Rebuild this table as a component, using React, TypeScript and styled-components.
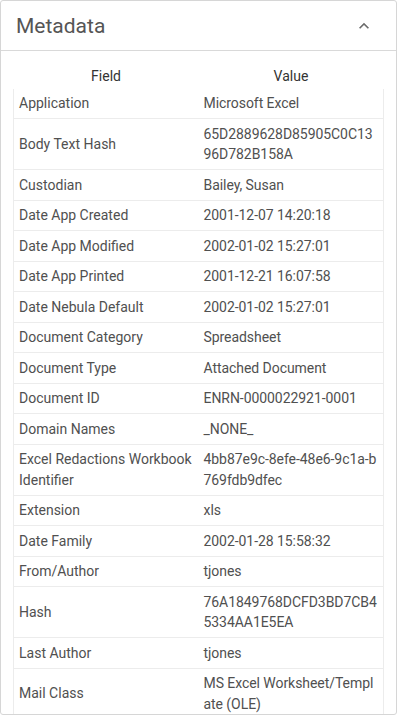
import React from 'react';
import styled, { createGlobalStyle } from 'styled-components';

interface MetaRow {
  field: string;
  value: string;
}

const rows: MetaRow[] = [
  { field: 'Application', value: 'Microsoft Excel' },
  { field: 'Body Text Hash', value: '65D2889628D85905C0C1396D782B158A' },
  { field: 'Custodian', value: 'Bailey, Susan' },
  { field: 'Date App Created', value: '2001-12-07 14:20:18' },
  { field: 'Date App Modified', value: '2002-01-02 15:27:01' },
  { field: 'Date App Printed', value: '2001-12-21 16:07:58' },
  { field: 'Date Nebula Default', value: '2002-01-02 15:27:01' },
  { field: 'Document Category', value: 'Spreadsheet' },
  { field: 'Document Type', value: 'Attached Document' },
  { field: 'Document ID', value: 'ENRN-0000022921-0001' },
  { field: 'Domain Names', value: '_NONE_' },
  { field: 'Excel Redactions Workbook Identifier', value: '4bb87e9c-8efe-48e6-9c1a-b769fdb9dfec' },
  { field: 'Extension', value: 'xls' },
  { field: 'Date Family', value: '2002-01-28 15:58:32' },
  { field: 'From/Author', value: 'tjones' },
  { field: 'Hash', value: '76A1849768DCFD3BD7CB45334AA1E5EA' },
  { field: 'Last Author', value: 'tjones' },
  { field: 'Mail Class', value: 'MS Excel Worksheet/Template (OLE)' },
];

const App: React.FC = () => {
  return (
    <>
      <GlobalStyle />
      <Card>
        <CardHeader>
          <Title>Metadata</Title>
          <Toggle aria-label="Collapse">
            <svg width="20" height="20" viewBox="0 0 24 24">
              <path d="M7.41 15.41L12 10.83l4.59 4.58L18 14l-6-6-6 6z" fill="currentColor" />
            </svg>
          </Toggle>
        </CardHeader>

        <CardBody>
          <Table>
            <thead>
              <tr>
                <HeadCell>Field</HeadCell>
                <HeadCell>Value</HeadCell>
              </tr>
            </thead>
            <tbody>
              {rows.map((row) => (
                <tr key={row.field}>
                  <FieldCell>{row.field}</FieldCell>
                  <ValueCell>{row.value}</ValueCell>
                </tr>
              ))}
            </tbody>
          </Table>
        </CardBody>
      </Card>
    </>
  );
};

export default App;

const GlobalStyle = createGlobalStyle`
  * {
    box-sizing: border-box;
  }

  body {
    margin: 0;
    background: #fff;
    font-family: Roboto, 'Liberation Sans', sans-serif;
  }
`;

const Card = styled.div`
  width: 397px;
  height: 715px;
  border: 1px solid #d6d6d6;
  border-radius: 3px;
  display: flex;
  flex-direction: column;
  overflow: hidden;
`;

const CardHeader = styled.div`
  height: 50px;
  flex-shrink: 0;
  padding: 0 22px 0 15px;
  display: flex;
  align-items: center;
  justify-content: space-between;
  border-bottom: 1px solid #d9d9d9;
`;

const Title = styled.h2`
  margin: 0;
  font-size: 21px;
  font-weight: 400;
  color: #555;
`;

const Toggle = styled.button`
  border: none;
  background: none;
  padding: 0;
  color: #6b6b6b;
  display: flex;
  cursor: pointer;
`;

const CardBody = styled.div`
  flex: 1;
  overflow: hidden;
  padding: 14px 12px 0;
`;

const Table = styled.table`
  width: 100%;
  table-layout: fixed;
  border-collapse: collapse;
  font-size: 14px;
  line-height: 20.5px;
  color: #505050;
`;

const HeadCell = styled.th`
  width: 50%;
  padding: 1px 5px 2px;
  font-weight: 400;
  color: #333;
  text-align: center;
`;

const FieldCell = styled.td`
  padding: 4.5px 5px;
  vertical-align: middle;
  border-bottom: 1px solid #ececec;
  border-left: 1px solid #ececec;
`;

const ValueCell = styled.td`
  padding: 4.5px 5px;
  vertical-align: middle;
  word-break: break-all;
  letter-spacing: -0.06px;
  border-bottom: 1px solid #ececec;
  border-right: 1px solid #ececec;
`;
